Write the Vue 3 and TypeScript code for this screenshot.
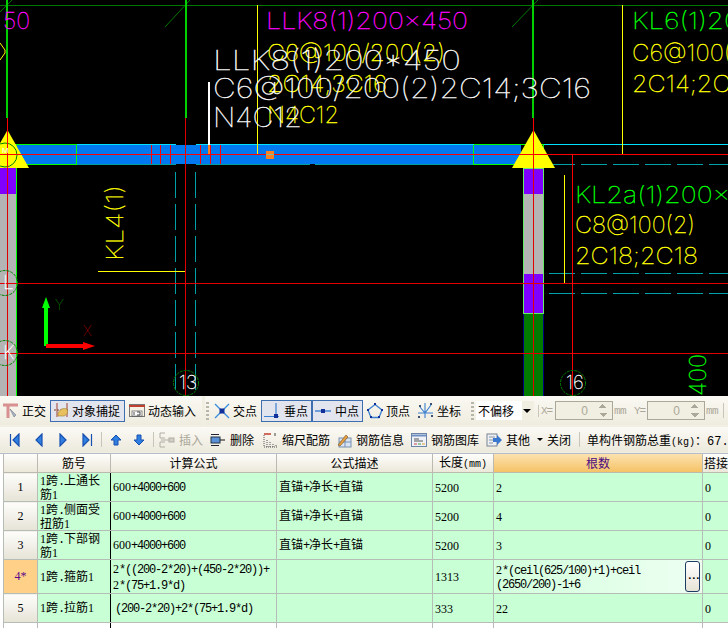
<script setup lang="ts">
// canvas text: x, baseline, width on screen, colour
const labels = [
  { t: '50', x: 3, y: 29, w: 27, c: '#ff00ff' },
  { t: 'LLK8(1)200×450', x: 266, y: 29, w: 202, c: '#ff00ff' },
  { t: 'KL6(1)200×450', x: 632, y: 29, w: 190, c: '#00ff00' },
  { t: 'C6@100/200(2)', x: 267, y: 61, w: 178, c: '#ffff00' },
  { t: '2C14;3C16', x: 267, y: 92, w: 120, c: '#ffff00' },
  { t: 'N4C12', x: 267, y: 123, w: 72, c: '#ffff00' },
  { t: 'C6@100(2)', x: 632, y: 61, w: 122, c: '#ffff00' },
  { t: '2C14;2C16', x: 632, y: 92, w: 122, c: '#ffff00' },
  { t: 'KL2a(1)200×450', x: 575, y: 203, w: 202, c: '#00ff00' },
  { t: 'C8@100(2)', x: 575, y: 233, w: 120, c: '#ffff00' },
  { t: '2C18;2C18', x: 575, y: 264, w: 123, c: '#ffff00' },
  { t: 'LLK8(1)200*450', x: 213, y: 70, w: 248, c: '#ffffff', big: true },
  { t: 'C6@100/200(2)2C14;3C16', x: 213, y: 98, w: 378, c: '#ffffff', big: true },
  { t: 'N4C12', x: 213, y: 127, w: 89, c: '#ffffff', big: true },
]

const dashes = 'M175.5 172V396M195.5 172V396M549 164.5H728M549 273.5H728M549 293.5H728'
const thinRed = 'M0 283.5H728M0 353.5H728M7.5 118V396M185.5 118V396M533.5 118V396'
const darkGreen = 'M0 5.5H728M0 12L12 0M165 27L190 0M512 27L538 0'
const ticks = [151.5, 160.5, 170.5, 200.5, 210.5, 220.5]
const axes = [
  { cx: 5, cy: 283, t: 'L', x: 3 },
  { cx: 5, cy: 353, t: 'K', x: 3 },
  { cx: 186, cy: 383, t: '13', x: 179 },
  { cx: 573, cy: 383, t: '16', x: 566 },
]

const navIcons = [
  'M2.5 1V13M11 1L5 7L11 13Z',
  'M10 1L4 7L10 13Z',
  'M4 1L10 7L4 13Z',
  'M11.5 1V13M3 1L9 7L3 13Z',
]

interface Row {
  no: string
  name: string[]
  formula: string[]
  desc: string
  len: string
  count: string[]
  current?: boolean
  shift?: boolean
}

const rows: Row[] = [
  { no: '1', name: ['1跨.上通长', '筋1'], formula: ['600+4000+600'], desc: '直锚+净长+直锚', len: '5200', count: ['2'] },
  { no: '2', name: ['1跨.侧面受', '扭筋1'], formula: ['600+4000+600'], desc: '直锚+净长+直锚', len: '5200', count: ['4'] },
  { no: '3', name: ['1跨.下部钢', '筋1'], formula: ['600+4000+600'], desc: '直锚+净长+直锚', len: '5200', count: ['3'] },
  { no: '4*', name: ['1跨.箍筋1'], formula: ['2*((200-2*20)+(450-2*20))+', '2*(75+1.9*d)'], desc: '', len: '1313', count: ['2*(ceil(625/100)+1)+ceil', '(2650/200)-1+6'], current: true },
  { no: '5', name: ['1跨.拉筋1'], formula: ['(200-2*20)+2*(75+1.9*d)'], desc: '', len: '333', count: ['22'], shift: true },
]

// digits, other latin and chinese each need their own font to keep the 6px/12px cell rhythm
const runs = (s: string) =>
  (s.match(/[0-9]+|[\x00-\x7f]+|[^\x00-\x7f]+/g) || []).map((text, i) => {
    const code = text.charCodeAt(0)
    return { key: i + text, text, cls: code >= 48 && code <= 57 ? 'dig' : code < 128 ? 'lat' : '' }
  })
</script>

<template>
  <div class="app">
    <svg class="cad" width="728" height="396" viewBox="0 0 728 396">
      <rect width="728" height="396" fill="#000" />

      <!-- beam -->
      <rect x="0" y="145" width="521" height="19" fill="#0078f0" />
      <path d="M0 144.5H176M196 144.5H728" stroke="#00e0ff" class="crisp" />
      <path d="M0 164.5H176M196 164.5H520" stroke="#00a0a0" class="crisp" />
      <path d="M16.5 144.5H76.5V164.5H16.5M473.5 144.5H543.5M473.5 144.5V164.5H523.5" stroke="#00ff00" fill="none" class="crisp" />
      <path d="M543.5 144.5V168" stroke="#00ff00" class="crisp" />
      <rect x="310" y="164" width="5" height="1" fill="#000" />

      <!-- columns -->
      <rect x="0" y="168" width="16" height="26" fill="#8000ff" />
      <rect x="0" y="194" width="16" height="202" fill="#b4b4b4" />
      <path d="M16.5 144V396" stroke="#00ff00" class="crisp" />
      <rect x="524" y="168" width="19" height="26" fill="#8000ff" />
      <rect x="524" y="194" width="19" height="80" fill="#b4b4b4" />
      <rect x="524" y="274" width="19" height="39" fill="#8000ff" />
      <rect x="523.5" y="168" width="20" height="145" fill="none" stroke="#66ee66" class="crisp" />
      <rect x="524" y="314" width="19" height="82" fill="#007a00" />
      <path d="M523.5 314V396M543.5 314V396" stroke="#000080" class="crisp" />

      <!-- grid -->
      <path :d="dashes" stroke="#00a0a8" stroke-dasharray="26 6" class="crisp" />
      <path :d="thinRed" stroke="#e00000" class="crisp" />
      <path :d="darkGreen" stroke="#007800" />
      <path d="M7 0V118M186 0V118M533 0V118" stroke="#00d000" stroke-width="2" class="crisp" />
      <path d="M257.5 5V154M622.5 5V154M564.5 175V283M98 271.5H185" stroke="#ffff00" class="crisp" />
      <path d="M208.5 82V145" stroke="#ffffff" stroke-width="2" class="crisp" />
      <path d="M572.5 155V396" stroke="#ff0000" class="crisp" />

      <!-- supports -->
      <path d="M7.5 130L29 168H-14Z" fill="#ffff00" />
      <path d="M533.5 130L555 168H512Z" fill="#ffff00" />
      <circle cx="5" cy="155" r="12" fill="none" stroke="#008000" />
      <path d="M0 154.5H728" stroke="#ff0000" class="crisp" />
      <path d="M7.5 118V168M533.5 118V168" stroke="#ff0000" class="crisp" />
      <path d="M0 43L5 50V53L0 60" fill="none" stroke="#ffff00" />
      <text x="2" y="153" fill="#fff" class="tiny">M</text>

      <path v-for="x in ticks" :key="x" :d="`M${x} 145V164`" stroke="#ff0000" class="crisp" />
      <rect x="208" y="145" width="2" height="9" fill="#ff8020" />
      <rect x="266" y="151" width="8" height="8" fill="#ff8020" />
      <path d="M266 154.5H274" stroke="#80c0a0" class="crisp" />

      <!-- drawing text -->
      <text
        v-for="l in labels"
        :key="l.t + l.y"
        :x="l.x"
        :y="l.y"
        :fill="l.c"
        :stroke="l.c"
        :textLength="l.w"
        lengthAdjust="spacingAndGlyphs"
        class="label"
        :class="{ big: l.big }"
      >{{ l.t }}</text>
      <text transform="translate(123 261) rotate(-90)" fill="#ffff00" stroke="#ffff00" textLength="76" lengthAdjust="spacingAndGlyphs" class="label">KL4(1)</text>
      <text transform="translate(706 396) rotate(-90)" fill="#00ff00" stroke="#00ff00" textLength="42" lengthAdjust="spacingAndGlyphs" class="label">400</text>

      <!-- axis bubbles -->
      <g v-for="a in axes" :key="a.t">
        <circle :cx="a.cx" :cy="a.cy" r="12.5" fill="none" stroke="#008000" stroke-dasharray="3 1" />
        <text :x="a.x" :y="a.cy + 6" fill="#fff" stroke="#fff" class="bubble">{{ a.t }}</text>
      </g>

      <!-- ucs -->
      <path d="M46 346V305" stroke="#00ff00" stroke-width="4" />
      <path d="M42 308L46 297L50 308Z" fill="#00ff00" />
      <path d="M46 346H85" stroke="#ff0000" stroke-width="4" />
      <path d="M83 342L95 346L83 350Z" fill="#ff0000" />
      <text x="55" y="310" fill="#00d000" class="ucs">Y</text>
      <text x="83" y="336" fill="#e00000" class="ucs">X</text>
    </svg>

    <div class="toolbars">
      <div class="bar bar-top">
        <div class="tool w-ortho">
          <svg width="17" height="17" viewBox="0 0 17 17">
            <path d="M1 3H16M6 3V16" stroke="#d89090" stroke-width="3" fill="none" />
            <path d="M8 7L14 13L12 15Z" fill="#a8b4c8" stroke="#667" stroke-width=".5" />
          </svg>
          <span>正交</span>
        </div>
        <div class="tool active w-snap">
          <svg width="17" height="17" viewBox="0 0 17 17">
            <path d="M4 1V15M14 1V15" stroke="#a04030" />
            <path d="M1 8H16" stroke="#804020" stroke-dasharray="2 1" />
            <path d="M5 11Q8 5 14 7Q16 12 11 14H5Z" fill="#e8c060" stroke="#a08030" stroke-width=".6" />
          </svg>
          <span>对象捕捉</span>
        </div>
        <div class="tool w-input">
          <svg width="18" height="17" viewBox="0 0 18 17">
            <rect x="1.5" y="2.5" width="15" height="12" fill="#f4f0e4" stroke="#777" />
            <path d="M1 4H17" stroke="#c04030" stroke-width="2" />
            <rect x="4" y="9" width="10" height="5" fill="#fff" stroke="#444" stroke-width=".6" />
            <path d="M6 10V13M9 10H12V13H9" stroke="#222" stroke-width=".8" fill="none" />
          </svg>
          <span>动态输入</span>
        </div>
        <i class="break"></i>
        <i class="grip"></i>
        <div class="tool w-cross">
          <svg width="16" height="16" viewBox="0 0 16 16">
            <path d="M1 1L15 15M15 1L1 15" stroke="#3c90e0" stroke-width="1.4" />
            <rect x="5.5" y="5.5" width="5" height="5" fill="#12309a" />
          </svg>
          <span>交点</span>
        </div>
        <div class="tool active w-perp">
          <svg width="16" height="16" viewBox="0 0 16 16">
            <path d="M12 0V15M0 13.5H15" stroke="#3c80d0" stroke-width="1.2" />
            <rect x="10" y="11" width="4" height="4" fill="#12309a" />
          </svg>
          <span>垂点</span>
        </div>
        <div class="tool active w-perp">
          <svg width="16" height="16" viewBox="0 0 16 16">
            <path d="M0 8H16" stroke="#3c80d0" stroke-width="1.4" />
            <rect x="6" y="6" width="4" height="4" fill="#12309a" />
          </svg>
          <span>中点</span>
        </div>
        <div class="tool w-vertex">
          <svg width="16" height="16" viewBox="0 0 16 16">
            <path d="M8 1.5L15 7L12 14.5H4L1 7Z" fill="none" stroke="#3c80d0" stroke-width="1.3" />
            <path d="M7 0H9V2H7ZM0 6H2V8H0ZM14 6H16V8H14ZM3 13H5V15H3ZM11 13H13V15H11Z" fill="#12309a" />
          </svg>
          <span>顶点</span>
        </div>
        <div class="tool w-coord">
          <svg width="17" height="17" viewBox="0 0 17 17">
            <path d="M8 1V16M1 11H16M3 5L8 11L14 3" stroke="#3c80d0" stroke-width="1.1" fill="none" />
            <path d="M2 3H4V5H2ZM13 1H15V3H13ZM1 14H3V16H1ZM14 13H16V15H14Z" fill="#405070" />
          </svg>
          <span>坐标</span>
        </div>
        <i class="grip grip-2"></i>
        <div class="combo">
          <span>不偏移</span>
          <b class="caret"></b>
        </div>
        <span class="coord-label">X=</span>
        <div class="spin"><span>0</span><i class="spin-arrows"></i></div>
        <span class="mm">mm</span>
        <span class="coord-label y">Y=</span>
        <div class="spin"><span>0</span><i class="spin-arrows"></i></div>
        <span class="mm">mm</span>
        <i class="sep sep-d"></i>
      </div>

      <div class="bar bar-bottom">
        <svg
          v-for="(d, i) in navIcons"
          :key="i"
          class="nav"
          width="14"
          height="14"
          viewBox="0 0 14 14"
        >
          <path :d="d" fill="#2f7fe0" stroke="#1850b0" stroke-width="1.2" />
        </svg>
        <i class="sep"></i>
        <svg class="arrow" width="12" height="12" viewBox="0 0 12 12">
          <path d="M6 1L11 6H8V11H4V6H1Z" fill="#2f7fe0" stroke="#1850b0" />
        </svg>
        <svg class="arrow" width="12" height="12" viewBox="0 0 12 12">
          <path d="M6 11L11 6H8V1H4V6H1Z" fill="#2f7fe0" stroke="#1850b0" />
        </svg>
        <i class="sep sep-b"></i>
        <div class="tool2 disabled i-insert">
          <svg width="16" height="16" viewBox="0 0 16 16">
            <path d="M6 1H1V6H6M6 10H1V15H6M2 8H10" stroke="#b0aea4" fill="none" />
            <rect x="10" y="6" width="5" height="4" fill="#d0cec4" stroke="#b0aea4" />
          </svg>
          <span>插入</span>
        </div>
        <div class="tool2 i-delete">
          <svg width="16" height="16" viewBox="0 0 16 16">
            <path d="M1 2.5H9M1 13.5H9" stroke="#223" />
            <rect x="1" y="5" width="9" height="6" fill="#5a90d8" stroke="#234" />
            <path d="M10 8H15" stroke="#111" />
          </svg>
          <span>删除</span>
        </div>
        <div class="tool2 i-scale">
          <svg width="14" height="16" viewBox="0 0 14 16">
            <path d="M1 3V15M1 15H14M4 8V15M7 10V15M10 12V15M13 13V15" stroke="#555" stroke-dasharray="1 1" />
            <path d="M1 2H8" stroke="#c03020" stroke-width="1.4" />
            <path d="M12 1V4" stroke="#444" />
          </svg>
          <span>缩尺配筋</span>
        </div>
        <div class="tool2 i-info">
          <svg width="16" height="16" viewBox="0 0 16 16">
            <rect x="3" y="6" width="12" height="9" fill="#d8e4f4" stroke="#7890b0" />
            <path d="M9 6V15M3 10H15" stroke="#7890b0" />
            <path d="M2 13L10 3L12 5L4 14Z" fill="#e8a040" stroke="#705020" stroke-width=".6" />
          </svg>
          <span>钢筋信息</span>
        </div>
        <div class="tool2 i-lib">
          <svg width="16" height="14" viewBox="0 0 16 14">
            <rect x=".5" y=".5" width="15" height="13" fill="#eef2f8" stroke="#6b84a8" />
            <path d="M1 2.5H15" stroke="#7090c0" stroke-width="2" />
            <path d="M3 6H8M3 8H12" stroke="#555" />
            <path d="M3 11H6" stroke="#d04040" /><path d="M7 11H10" stroke="#40a040" /><path d="M11 11H14" stroke="#e0a020" />
          </svg>
          <span>钢筋图库</span>
        </div>
        <div class="tool2 i-other">
          <svg width="16" height="16" viewBox="0 0 16 16">
            <rect x="1" y="2" width="10" height="12" fill="#eef0f4" stroke="#7a8494" />
            <path d="M3 5H9M3 8H7M3 11H7" stroke="#8a94a4" />
            <path d="M7 6H11V3L16 8L11 13V10H7Z" fill="#3a78d0" />
          </svg>
          <span>其他</span>
          <b class="caret small"></b>
        </div>
        <span class="close">关闭</span>
        <i class="sep sep-c"></i>
        <span class="total">单构件钢筋总重<em>(kg)</em>：<em class="num">67.5</em></span>
      </div>
    </div>

    <div class="grid-wrap">
      <table class="grid">
        <colgroup>
          <col class="c-no" /><col class="c-name" /><col class="c-formula" /><col class="c-desc" />
          <col class="c-len" /><col class="c-count" /><col class="c-lap" />
        </colgroup>
        <thead>
          <tr>
            <th></th>
            <th>筋号</th>
            <th>计算公式</th>
            <th>公式描述</th>
            <th>长度<em>(mm)</em></th>
            <th class="hot">根数</th>
            <th class="left">搭接</th>
          </tr>
        </thead>
        <tbody>
          <tr v-for="r in rows" :key="r.no" :class="{ current: r.current }">
            <td class="no">{{ r.no }}</td>
            <td class="name">
              <div v-for="line in r.name" :key="line">
                <span v-for="p in runs(line)" :key="p.key" :class="p.cls">{{ p.text }}</span>
              </div>
            </td>
            <td class="formula" :class="{ shift: r.shift }">
              <div v-for="line in r.formula" :key="line">
                <span v-for="p in runs(line)" :key="p.key" :class="p.cls">{{ p.text }}</span>
              </div>
            </td>
            <td>
              <span v-for="p in runs(r.desc)" :key="p.key" :class="p.cls">{{ p.text }}</span>
            </td>
            <td><span v-for="p in runs(r.len)" :key="p.key" :class="p.cls">{{ p.text }}</span></td>
            <td :class="{ editing: r.current }">
              <div v-for="line in r.count" :key="line">
                <span v-for="p in runs(line)" :key="p.key" :class="p.cls">{{ p.text }}</span>
              </div>
              <button v-if="r.current" class="more" type="button">...</button>
            </td>
            <td><span class="dig">0</span></td>
          </tr>
          <tr class="blank"><td></td><td></td><td></td><td></td><td></td><td></td><td></td></tr>
        </tbody>
      </table>
    </div>
  </div>
</template>

<style>
html,
body {
  margin: 0;
  background: #f1efe2;
  overflow: hidden;
}
</style>

<style scoped>
.app {
  width: 728px;
  height: 628px;
  overflow: hidden;
  display: flex;
  flex-direction: column;
  font-family: "Noto Sans CJK SC", "Liberation Sans", sans-serif;
  font-size: 12px;
  color: #000;
}

.cad {
  display: block;
  flex: none;
}
.crisp {
  shape-rendering: crispEdges;
}
.label {
  font-family: Inter, "Liberation Sans", sans-serif;
  font-weight: 100;
  font-size: 23px;
  stroke-width: 0.35;
}
.label.big {
  font-size: 27px;
}
.bubble {
  font-family: Inter, "Liberation Sans", sans-serif;
  font-weight: 100;
  font-size: 19px;
  stroke-width: 0.3;
}
.ucs {
  font-family: Inter, "Liberation Sans", sans-serif;
  font-weight: 100;
  font-size: 14px;
}
.tiny {
  font-family: "Liberation Sans", sans-serif;
  font-size: 8px;
}

.toolbars {
  flex: none;
  height: 57px;
  background: #f1efe2;
}
.bar {
  display: flex;
  align-items: center;
  white-space: nowrap;
}
.bar-top {
  height: 29px;
  padding: 0 0 0 2px;
  background: linear-gradient(#faf9f3, #efecdf);
}
.bar-bottom {
  height: 25px;
  margin-top: 2px;
  padding-left: 3px;
  background: linear-gradient(#fbfaf5, #ece9dc);
}
.tool,
.tool2 {
  display: flex;
  align-items: center;
  gap: 4px;
  height: 22px;
  box-sizing: border-box;
  flex: none;
}
.tool {
  gap: 3px;
}
.tool svg,
.tool2 svg,
.nav,
.arrow {
  flex: none;
}
.tool.active {
  background: #e2e5ee;
  border: 1px solid #3c6eb0;
  padding-left: 2px;
}
.w-ortho {
  width: 48px;
}
.w-snap {
  width: 75px;
  gap: 2px;
}
.w-input {
  width: 72px;
  margin-left: 3px;
  gap: 2px;
}
.w-cross {
  width: 47px;
}
.w-perp {
  width: 51px;
  gap: 4px;
}
.w-vertex {
  width: 46px;
  margin-left: 4px;
}
.w-coord {
  width: 50px;
  margin-left: 4px;
}
.break {
  width: 3px;
  height: 29px;
  margin: 0 1px 0 2px;
  flex: none;
  background: #f1efe2;
}
.grip {
  width: 3px;
  height: 18px;
  margin: 0 5px 0 0;
  flex: none;
  background: repeating-linear-gradient(#b8b6a8 0 2px, transparent 2px 4px);
}
.grip-2 {
  margin: 0 2px 0 4px;
}
.combo {
  width: 58px;
  height: 19px;
  flex: none;
  background: linear-gradient(90deg, #fff 46px, #f1efe2 46px);
  display: flex;
  align-items: center;
  justify-content: space-between;
  padding-left: 2px;
  box-sizing: border-box;
}
.caret {
  width: 0;
  height: 0;
  margin-right: 3px;
  border: 4px solid transparent;
  border-top-color: #000;
  border-bottom: 0;
}
.caret.small {
  border-width: 3px;
  border-bottom: 0;
  margin: 0 0 0 3px;
}
.coord-label,
.mm {
  font-family: "Liberation Mono", monospace;
  font-size: 11px;
  color: #aca899;
  flex: none;
}
.coord-label {
  width: 17px;
  box-sizing: border-box;
  margin-left: 4px;
  padding-left: 2px;
  border-left: 1px solid #c8c6b8;
  letter-spacing: -1px;
}
.coord-label.y {
  margin-left: 2px;
  width: 13px;
  padding-left: 0;
  border-left: 0;
}
.mm {
  width: 18px;
  margin-left: 1px;
  letter-spacing: -.6px;
}
.spin {
  width: 58px;
  height: 19px;
  flex: none;
  box-sizing: border-box;
  border: 1px solid #aca899;
  background: #f1efe2;
  display: flex;
  align-items: center;
  justify-content: flex-end;
  font-family: "Liberation Sans", sans-serif;
  color: #aca899;
  font-size: 12px;
}
.spin-arrows {
  width: 8px;
  height: 13px;
  margin: 0 5px 0 11px;
  background:
    linear-gradient(135deg, transparent 50%, #aca899 50%) 0 0 / 4px 4px no-repeat,
    linear-gradient(225deg, transparent 50%, #aca899 50%) 4px 0 / 4px 4px no-repeat,
    linear-gradient(45deg, transparent 50%, #aca899 50%) 0 9px / 4px 4px no-repeat,
    linear-gradient(315deg, transparent 50%, #aca899 50%) 4px 9px / 4px 4px no-repeat;
}

.nav {
  margin: 0 5px;
}
.sep {
  width: 1px;
  height: 15px;
  margin: 0 8px 0 2px;
  background: #c8c6b8;
  flex: none;
}
.sep-b {
  margin: 0 5px 0 8px;
}
.sep-c {
  margin: 0 7px 0 8px;
}
.sep-d {
  margin: 0 0 0 -1px;
}
.arrow + .arrow {
  margin-left: 11px;
}
.disabled {
  color: #aca899;
}
.i-insert {
  width: 51px;
}
.i-delete {
  width: 53px;
}
.i-scale {
  width: 73px;
  gap: 5px;
}
.i-info {
  width: 75px;
}
.i-lib {
  width: 75px;
}
.i-other {
  width: 61px;
}
.close {
  flex: none;
}
.total {
  flex: none;
}
em {
  font-style: normal;
  font-family: "Liberation Mono", monospace;
  font-size: 10px;
}
em.num {
  font-size: 12px;
}

.grid-wrap {
  flex: 1;
  min-height: 0;
  padding-left: 3px;
  border-top: 1px solid #b4bcc8;
  background: #fff;
  overflow: hidden;
}
.grid {
  table-layout: fixed;
  border-collapse: collapse;
  width: 736px;
}
.c-no { width: 34px; }
.c-name { width: 73px; }
.c-formula { width: 166px; }
.c-desc { width: 156px; }
.c-len { width: 61px; }
.c-count { width: 209px; }
.c-lap { width: 37px; }

th {
  height: 18px;
  padding: 0;
  font-weight: 400;
  font-size: 12px;
  line-height: 1;
  text-align: center;
  white-space: nowrap;
  overflow: hidden;
  background: linear-gradient(#fdfdfb, #ebe8da);
  border: 1px solid #bcbab0;
  border-top: 0;
}
th.hot {
  background: linear-gradient(#fce2b0, #f5c265);
  color: #4b0a82;
}
th.left {
  text-align: left;
  padding-left: 1px;
}
td {
  height: 28px;
  padding: 0 0 0 2px;
  background: #c9ffd5;
  border: 1px solid #b6bcb6;
  line-height: 13px;
  white-space: nowrap;
  overflow: hidden;
  vertical-align: middle;
  font-size: 12px;
}
td.no {
  text-align: center;
  padding: 0;
  font-family: "Liberation Serif", serif;
  font-size: 12px;
  background: linear-gradient(#fdfdfb, #e6e3d6);
}
.current td {
  height: 33px;
}
.current td.no {
  background: #ffd088;
  color: #5a0a8c;
}
td.name {
  border-right: 1px solid #000;
  line-height: 12px;
}
.lat {
  font-family: "Liberation Mono", monospace;
  font-size: 12px;
  letter-spacing: -1.2px;
}
.dig {
  font-family: "Liberation Serif", serif;
  font-size: 12px;
}
.formula.shift {
  padding-left: 4px;
}
td.editing {
  position: relative;
  background: linear-gradient(90deg, #d2ffdc, #eefff2);
  line-height: 12px;
}
.more {
  position: absolute;
  right: 2px;
  top: 1px;
  width: 15px;
  height: 31px;
  padding: 0;
  border: 1px solid #1c3c64;
  border-radius: 3px;
  background: linear-gradient(#fff, #e6e3d6);
  font-family: "Liberation Mono", monospace;
  font-weight: 700;
  font-size: 11px;
  letter-spacing: -2.6px;
  line-height: 1;
}
.blank td {
  background: #fff;
  height: 20px;
}
.blank td:nth-child(2) {
  border-right-color: #000;
}
</style>
